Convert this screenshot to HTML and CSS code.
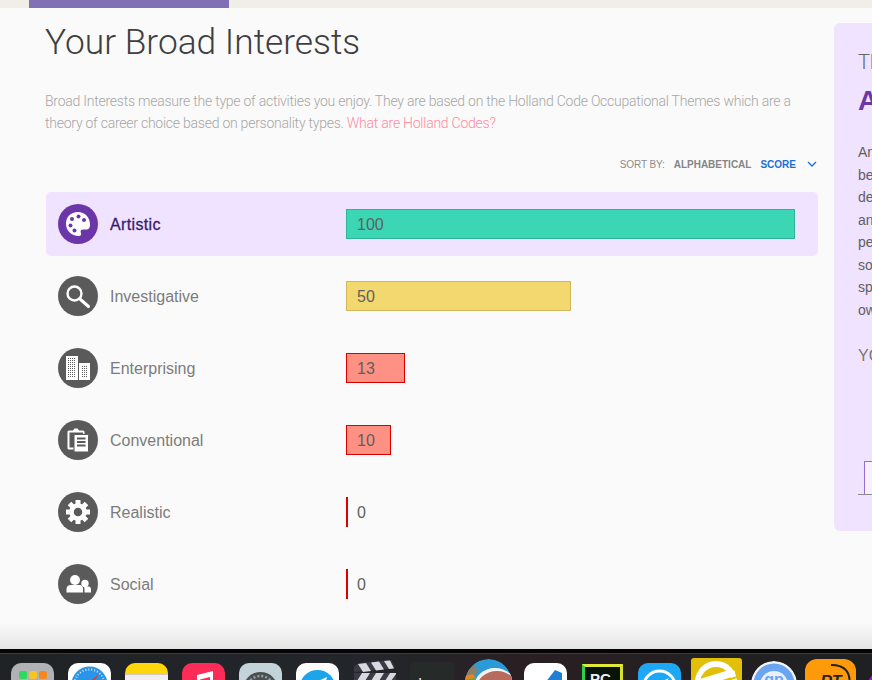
FILE: index.html
```html
<!DOCTYPE html>
<html lang="en">
<head>
  <meta charset="UTF-8">
  <meta name="viewport" content="width=device-width, initial-scale=1.0">
  <title>Your Broad Interests</title>
  <link rel="stylesheet" href="styles.css">
</head>
<body>

<div class="progress"><div class="progress-fill"></div></div>

<div class="page">
  <div class="main">
    <h1>Your Broad Interests</h1>
    <p class="intro">Broad Interests measure the type of activities you enjoy. They are based on the Holland Code Occupational Themes which are a theory of career choice based on personality types. <a href="#">What are Holland Codes?</a></p>

    <div class="sort">
      <span>SORT BY:</span>
      <b>ALPHABETICAL</b>
      <b class="active">SCORE</b>
      <svg width="10" height="6" viewBox="0 0 10 6"><path d="M1 1l4 4 4-4" fill="none" stroke="#1a6fd8" stroke-width="1.3"/></svg>
    </div>

    <div class="rows">
      <div class="row selected">
        <div class="icon">
          <svg viewBox="0 0 40 40"><path d="M20 8C12.8 8 8 13 8 19.800 8 26.900 13.800 32 20.600 32c2.500 0 3-1.500 2.300-3-.8-1.700.1-3.400 2.100-3.400h3.300c3 0 3.700-2.300 3.700-5C32 13 26.800 8 20 8z" fill="#fff"/><circle cx="14" cy="15" r="2" fill="#6b37a8"/><circle cx="20.500" cy="12.500" r="2" fill="#6b37a8"/><circle cx="12.500" cy="21.500" r="2" fill="#6b37a8"/><circle cx="26" cy="16" r="2" fill="#6b37a8"/><circle cx="16.500" cy="26.500" r="2" fill="#6b37a8"/></svg>
        </div>
        <div class="name">Artistic</div>
        <div class="track"><div class="bar green" style="width:100%"></div><span class="value">100</span></div>
      </div>
      <div class="row">
        <div class="icon">
          <svg viewBox="0 0 40 40"><circle cx="16.500" cy="17.500" r="7" fill="none" stroke="#fff" stroke-width="2.400"/><path d="M22.500 23.500l8 7" stroke="#fff" stroke-width="3" stroke-linecap="round"/></svg>
        </div>
        <div class="name">Investigative</div>
        <div class="track"><div class="bar yellow" style="width:50%"></div><span class="value">50</span></div>
      </div>
      <div class="row">
        <div class="icon">
          <svg viewBox="0 0 40 40"><defs><pattern id="windows" width="2" height="2" patternUnits="userSpaceOnUse"><rect width="1" height="1" fill="#5a5a5a"/></pattern></defs><path d="M8 8h12v24H8zM21 15h11v17H21z" fill="#fff"/><path d="M10 10h8v20h-8zM23 17h7v13h-7z" fill="url(#windows)"/></svg>
        </div>
        <div class="name">Enterprising</div>
        <div class="track"><div class="bar red" style="width:13.100%"></div><span class="value">13</span></div>
      </div>
      <div class="row">
        <div class="icon">
          <svg viewBox="0 0 40 40"><path d="M11 10.500h4l1.500-2h3l1.500 2h4a1.500 1.500 0 0 1 1.500 1.500v16a1.500 1.500 0 0 1-1.500 1.500H11A1.500 1.500 0 0 1 9.500 28V12a1.500 1.500 0 0 1 1.500-1.500z" fill="#fff"/><path d="M11.500 12.500h13.500v15H11.500z" fill="#5a5a5a"/><path d="M17 14.500h12.500a1 1 0 0 1 1 1V31a1 1 0 0 1-1 1H17a1 1 0 0 1-1-1V15.500a1 1 0 0 1 1-1z" fill="#fff" stroke="#5a5a5a" stroke-width="1"/><path d="M19 18.500h8.500M19 22h8.500M19 25.500h8.500" stroke="#5a5a5a" stroke-width="2"/></svg>
        </div>
        <div class="name">Conventional</div>
        <div class="track"><div class="bar red" style="width:10%"></div><span class="value">10</span></div>
      </div>
      <div class="row">
        <div class="icon">
          <svg viewBox="0 0 40 40"><circle cx="20" cy="20" r="6.500" fill="none" stroke="#fff" stroke-width="4.500"/><path d="M20 8v7M20 25v7M8 20h7M25 20h7M11.500 11.500l5 5M23.500 23.500l5 5M28.500 11.500l-5 5M16.500 23.500l-5 5" stroke="#fff" stroke-width="5"/></svg>
        </div>
        <div class="name">Realistic</div>
        <div class="track"><div class="bar red" style="width:0"></div><span class="value">0</span></div>
      </div>
      <div class="row">
        <div class="icon">
          <svg viewBox="0 0 40 40"><circle cx="17" cy="16" r="5" fill="#fff"/><path d="M8.500 28.500v-3.500c0-2.500 2-4 4-4h9c2 0 3.500 1.500 3.500 4v3.500z" fill="#fff"/><circle cx="27" cy="19.500" r="3.700" fill="#fff"/><path d="M26.500 28.500V25c0-1.200-.3-2-1-2.500h5c1.700 0 2.500 1.200 2.500 2.800v3.200z" fill="#fff"/></svg>
        </div>
        <div class="name">Social</div>
        <div class="track"><div class="bar red" style="width:0"></div><span class="value">0</span></div>
      </div>
    </div>
  </div>

  <div class="side">
    <div class="side-top">Th</div>
    <div class="side-title">Artistic</div>
    <p class="side-text">An<br>be<br>de<br>an<br>pe<br>so<br>sp<br>ow</p>
    <div class="side-label">YO</div>
    <div class="chart"><div class="chart-box"></div></div>
  </div>
</div>

<div class="dock">
  <div class="app launchpad"><i class="g"></i><i class="y"></i><i class="o"></i></div>
  <div class="app safari"><svg viewBox="0 0 43 43"><circle cx="21.500" cy="21.500" r="18" fill="#2a95e8"/><circle cx="21.500" cy="21.500" r="15" fill="none" stroke="#cfe8fb" stroke-width="2" stroke-dasharray="1 2"/><path d="M31 11l-11 9 3 3z" fill="#e8392f"/></svg></div>
  <div class="app notes"></div>
  <div class="app music"><svg viewBox="0 0 43 43"><path d="M15 12l16-4v26h-3V14l-10 2.500V34h-3z" fill="#fff"/></svg></div>
  <div class="app prefs"><svg viewBox="0 0 43 43"><circle cx="21.500" cy="26.500" r="17.500" fill="#4a4f52"/><circle cx="21.500" cy="26.500" r="13.500" fill="none" stroke="#9a9fa2" stroke-width="2.500" stroke-dasharray="2 2"/></svg></div>
  <div class="app telegram"><svg viewBox="0 0 43 43"><circle cx="21.500" cy="25" r="18" fill="#1ca5ea"/><path d="M11 23l20-9-4 16-6-4z" fill="#fff"/></svg></div>
  <div class="app clapper"><svg viewBox="0 0 43 47"><path d="M1 8q1-4 6-5l31-3 4 8-41 4z" fill="#3b3b48"/><path d="M5 4l8-1 5 8-8 1zM18 2.500l8-1 5 8-8 1zM31 1l6-.5 4 8-5 .5z" fill="#d8d8e0"/><path d="M1 13h42v34H1z" fill="#3b3b48"/><path d="M9 13h8l-5 8H4zM23 13h8l-5 8h-8zM37 13h6v1l-5 7h-6z" fill="#d8d8e0"/></svg></div>
  <div class="app terminal"><span>I-</span></div>
  <div class="app chrome"><svg viewBox="0 0 47 47"><circle cx="23.500" cy="23.500" r="23.500" fill="#2a9bd6"/><path d="M3 12c2-3 4-5 7-6l3 6-7 8H0z" fill="#8a7f68"/><path d="M0 17l8-2 3 5-11 4z" fill="#e8832a"/><path d="M0 21l11-2 3 28H0z" fill="#3cb53c"/><ellipse cx="30" cy="28" rx="21" ry="19" fill="#f2f2ee"/><ellipse cx="32" cy="31" rx="21" ry="19" fill="#b86a5e"/></svg></div>
  <div class="app vscode"><svg viewBox="0 0 43 43"><path d="M5 22l6-4 7 6L31 7l7 3v30H5z" fill="#1f7fd4"/></svg></div>
  <div class="app pycharm"><span>PC</span></div>
  <div class="app mail"><svg viewBox="0 0 43 43"><circle cx="21.500" cy="24" r="16" fill="none" stroke="#fff" stroke-width="3"/><path d="M12 24l19-9-9 13z" fill="#fff"/></svg></div>
  <div class="app eclipse"><svg viewBox="0 0 51 43"><circle cx="25" cy="24" r="21" fill="#fff"/><circle cx="25" cy="25" r="16" fill="#e3c008"/><path d="M9 21l29-9 6 1v5L12 28z" fill="#fff"/><path d="M12 29l34-11v2L12 31z" fill="#e3c008"/></svg></div>
  <div class="app browser"><svg viewBox="0 0 46 46"><circle cx="23" cy="23" r="23" fill="#f2f4f7"/><circle cx="23" cy="23" r="20.500" fill="#6aa5f3"/><circle cx="23" cy="24" r="14" fill="#e8f0fb"/><text x="23" y="24" text-anchor="middle" class="browser-text">gp</text></svg></div>
  <div class="app torrent"><svg viewBox="0 0 51 43"><path d="M26 6c14 0 21 7 18 24" fill="none" stroke="#222" stroke-width="2"/><text x="26" y="28" text-anchor="middle" class="torrent-text">RT</text></svg></div>
  <div class="app purple"></div>
</div>

</body>
</html>
```

FILE: styles.css
```css
/* General Styles */
html, body {
  margin: 0;
  padding: 0;
  height: 680px;
  overflow: hidden;
}
body {
  font-family: "Liberation Sans", Arial, sans-serif;
  background: #fafafa;
  color: #777;
  display: flex;
  flex-direction: column;
}
.progress {
  height: 8px;
  background: #efefe7;
  padding-left: 29px;
}
.progress-fill {
  width: 200px;
  height: 8px;
  background: #8170b5;
}
/* Page */
.page {
  flex: 1;
  display: flex;
  align-items: flex-start;
  overflow: hidden;
  background: linear-gradient(to bottom, #fafafa 0, #fafafa 615px, #e4e4e4 641px);
}
.main {
  width: 773px;
  flex-shrink: 0;
  margin-left: 45px;
}
h1 {
  font-family: Roboto, sans-serif;
  font-weight: 300;
  font-size: 35.300px;
  line-height: 42px;
  color: #3f3f3f;
  margin: 13px 0 0;
}
.intro {
  font-family: Roboto, sans-serif;
  font-weight: 300;
  font-size: 14px;
  letter-spacing: -0.24px;
  line-height: 22px;
  color: #a6a6a6;
  margin: 27px 0 0;
}
.intro a {
  color: #ff8aa0;
  text-decoration: none;
}
/* Sort */
.sort {
  display: flex;
  justify-content: flex-end;
  align-items: center;
  height: 14px;
  margin-top: 23px;
  font-size: 10px;
  color: #8c8c8c;
}
.sort span {
  letter-spacing: -0.1px;
}
.sort b {
  margin-left: 9px;
  color: #858585;
}
.sort .active {
  color: #1a6fd8;
}
.sort svg {
  margin-left: 11px;
  margin-right: 1px;
}
/* Rows */
.rows {
  margin-top: 21px;
  margin-left: 1px;
}
.row {
  display: flex;
  align-items: center;
  height: 64px;
  padding: 0 12px;
  margin-bottom: 8px;
  border-radius: 5px;
}
.row.selected {
  background: #f0e3ff;
}
.icon {
  width: 40px;
  height: 40px;
  flex-shrink: 0;
  border-radius: 50%;
  background: #5a5a5a;
}
.icon svg {
  display: block;
  width: 40px;
  height: 40px;
}
.selected .icon {
  background: #6b37a8;
}
.name {
  width: 236px;
  flex-shrink: 0;
  margin: 2px 0 0 12px;
  font-size: 16px;
  color: #7c7c7c;
}
.selected .name {
  color: #3a1a6e;
  letter-spacing: .35px;
  -webkit-text-stroke: 0.3px #3a1a6e;
}
.track {
  position: relative;
  width: 449px;
  height: 30px;
}
.bar {
  box-sizing: border-box;
  height: 30px;
  border-style: solid;
  border-width: 1px;
}
.bar.green {
  background: #3bd6b4;
  border-color: #2fb397;
}
.bar.yellow {
  background: #f3d86f;
  border-color: #d4b65c;
}
.bar.red {
  background: #fe9084;
  border-color: #d90000;
}
.value {
  position: absolute;
  left: 11px;
  top: 7px;
  font-size: 16px;
  color: #5f5f5f;
}
/* Side panel */
.side {
  width: 320px;
  flex-shrink: 0;
  box-sizing: border-box;
  height: 508px;
  margin: 15px 0 0 16px;
  padding: 27px 24px 0;
  background: #f0e3ff;
  border-radius: 6px;
  color: #666;
}
.side-top {
  font-family: Roboto, sans-serif;
  font-weight: 300;
  font-size: 20px;
  line-height: 24px;
}
.side-title {
  font-size: 28px;
  font-weight: bold;
  line-height: 34px;
  margin-top: 10px;
  color: #6b37a8;
}
.side-text {
  font-size: 14px;
  line-height: 22.500px;
  margin: 23px 0 0;
  color: #5f5f5f;
}
.side-label {
  font-size: 16px;
  margin-top: 26px;
  color: #777;
}
.chart {
  margin-top: 96px;
  border-bottom: 1px solid #8c8c8c;
  padding-left: 6px;
}
.chart-box {
  height: 33px;
  box-sizing: border-box;
  background: #f7f1ff;
  border: 1px solid #9a6bd0;
  border-bottom: 0;
}
/* Dock */
.dock {
  height: 26px;
  flex-shrink: 0;
  display: flex;
  align-items: flex-start;
  overflow: hidden;
  background: linear-gradient(to right, #1f2326 0, #23262a 45%, #2a1f22 60%, #1e2022 100%);
  border-top: 1px solid #3a3d40;
  box-shadow: 0 -4px 0 #050505;
  padding-left: 11px;
}
.app {
  width: 43px;
  height: 43px;
  flex-shrink: 0;
  margin-top: 9px;
  margin-right: 14px;
  border-radius: 10px;
  overflow: hidden;
  background: #fff;
}
.app svg {
  display: block;
}
.launchpad {
  background: #b0b2b5;
  display: flex;
  justify-content: center;
  gap: 2px;
  padding-top: 8px;
  box-sizing: border-box;
}
.launchpad i {
  width: 8px;
  height: 8px;
  border-radius: 2px;
}
.launchpad .g { background: #2bdc5b; }
.launchpad .y { background: #f7c325; }
.launchpad .o { background: #f5891f; }
.notes {
  background: linear-gradient(to bottom, #ffd60a 0, #ffd60a 10px, #cfcac0 10px, #cfcac0 12px, #f1eeee 12px);
}
.music { background: #fb2d58; }
.prefs { background: #c2d3da; }
.clapper {
  background: none;
  border-radius: 0;
  margin-top: 6px;
  height: 47px;
}
.terminal {
  background: #262a28;
  width: 44px;
  margin-right: 11px;
  border-radius: 4px;
  margin-top: 8px;
  color: #eee;
  font-size: 15px;
  padding: 12px 0 0 8px;
  box-sizing: border-box;
}
.chrome {
  background: none;
  border-radius: 50%;
  width: 47px;
  height: 47px;
  margin-top: 5px;
  margin-right: 12px;
}
.vscode {
  margin-right: 15px;
}
.pycharm {
  width: 41px;
  margin-top: 10px;
  border-radius: 0;
  margin-right: 15px;
  box-sizing: border-box;
  background: #07130b;
  border: 3px solid;
  border-color: #e2e83a #d8e02a #22c55e #2fd14a;
  color: #eee;
  font-weight: bold;
  font-size: 15px;
  padding: 3px 0 0 5px;
}
.mail {
  background: #1da8f5;
  margin-right: 10px;
}
.eclipse {
  width: 51px;
  margin-top: 4px;
  margin-right: 9px;
  border-radius: 3px;
  background: #e3c008;
}
.browser {
  width: 46px;
  height: 46px;
  margin-top: 7px;
  margin-right: 8px;
  border-radius: 50%;
  background: none;
}
.browser-text {
  font-size: 16px;
  font-weight: bold;
  fill: #6aa5f3;
}
.torrent {
  width: 51px;
  margin-top: 5px;
  margin-right: 10px;
  border-radius: 12px;
  background: #ff9a0a;
}
.torrent-text {
  font-size: 16px;
  font-style: italic;
  font-weight: bold;
  fill: #222;
}
.purple {
  border-radius: 50%;
  background: #a015c9;
  margin-top: 15px;
}
```
